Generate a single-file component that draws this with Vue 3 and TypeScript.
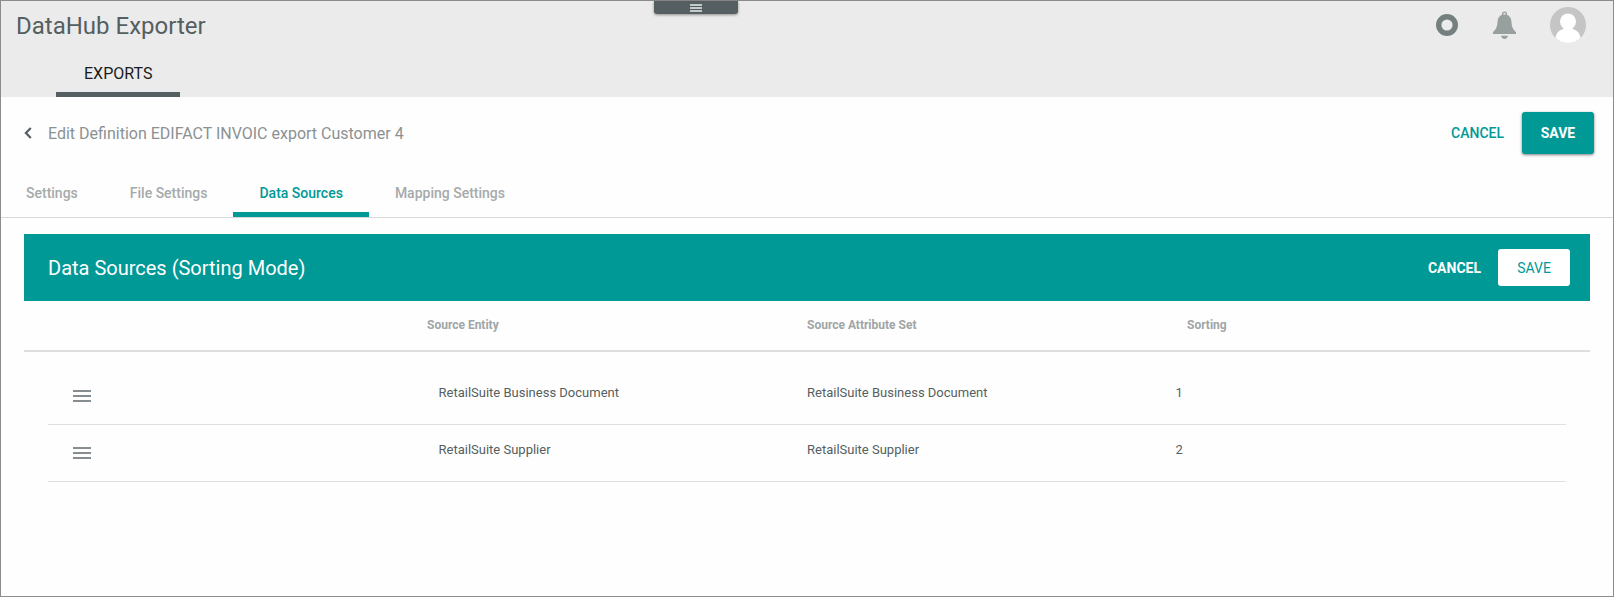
<script setup lang="ts">
import { ref } from 'vue'

interface DataSource {
  entity: string
  attributeSet: string
  sorting: number
}

const tabs: string[] = ['Settings', 'File Settings', 'Data Sources', 'Mapping Settings']
const activeTab = ref<string>('Data Sources')

const sources = ref<DataSource[]>([
  { entity: 'RetailSuite Business Document', attributeSet: 'RetailSuite Business Document', sorting: 1 },
  { entity: 'RetailSuite Supplier', attributeSet: 'RetailSuite Supplier', sorting: 2 },
])
</script>

<template>
  <div class="app">
    <header class="header">
      <button class="drawer" type="button" aria-label="Toggle menu">
        <svg width="12" height="8" viewBox="0 0 12 8" shape-rendering="crispEdges">
          <path d="M0 0h12v2H0zM0 3h12v2H0zM0 6h12v2H0z" fill="#c3caca" />
        </svg>
      </button>
      <div class="brand-row">
        <h1 class="brand">DataHub Exporter</h1>
        <div class="tools">
          <button class="icon-button" type="button" aria-label="Status">
            <svg width="24" height="24" viewBox="0 0 24 24">
              <circle cx="12" cy="12" r="8.3" fill="none" stroke="#757f7f" stroke-width="5.4" />
            </svg>
          </button>
          <button class="icon-button" type="button" aria-label="Notifications">
            <svg width="23" height="28" viewBox="0 0 23 28">
              <circle cx="11.500" cy="3" r="1.900" fill="none" stroke="#98a09f" stroke-width="1.400" />
              <path
                d="M11.500 3.600c-4.300 0-6.500 2.800-6.900 6.700C4.200 15.500 3.500 18.300 0 21v2h23v-2c-3.500-2.700-4.200-5.500-4.600-10.700C18 6.400 15.800 3.600 11.500 3.600z"
                fill="#98a09f"
              />
              <path d="M8 24.800h7c-.3 1.900-1.700 3.200-3.500 3.200S8.300 26.700 8 24.800z" fill="#98a09f" />
            </svg>
          </button>
          <button class="icon-button" type="button" aria-label="User profile">
            <svg width="36" height="36" viewBox="0 0 36 36">
              <defs>
                <clipPath id="avatar-clip"><circle cx="18" cy="18" r="18" /></clipPath>
              </defs>
              <circle cx="18" cy="18" r="18" fill="#c5c5c5" />
              <g clip-path="url(#avatar-clip)" fill="#fff">
                <circle cx="18" cy="14.500" r="8" />
                <path d="M13.500 19h9v3c4 .8 7 3.500 8 8.500V36h-25v-5.500c1-5 4-7.700 8-8.500z" />
              </g>
            </svg>
          </button>
        </div>
      </div>
      <nav class="main-nav">
        <a class="main-link" href="#exports">EXPORTS</a>
      </nav>
    </header>

    <main>
      <div class="toolbar">
        <button class="back" type="button" aria-label="Back">
          <svg width="8" height="12" viewBox="0 0 8 12">
            <path d="M6.800 1L1.900 6l4.900 5" fill="none" stroke="#555f61" stroke-width="2.200" />
          </svg>
        </button>
        <h2 class="page-title">Edit Definition EDIFACT INVOIC export Customer 4</h2>
        <button class="text-button" type="button">CANCEL</button>
        <button class="button primary" type="button">SAVE</button>
      </div>

      <div class="tabs" role="tablist">
        <button
          v-for="tab in tabs"
          :key="tab"
          class="tab"
          :class="{ active: tab === activeTab }"
          type="button"
          role="tab"
          :aria-selected="tab === activeTab"
          @click="activeTab = tab"
        >
          {{ tab }}
        </button>
      </div>

      <section class="panel">
        <div class="banner">
          <h3 class="banner-title">Data Sources (Sorting Mode)</h3>
          <button class="text-button light" type="button">CANCEL</button>
          <button class="button inverse" type="button">SAVE</button>
        </div>

        <table class="table">
          <thead>
            <tr class="head-row">
              <td></td>
              <th scope="col">Source Entity</th>
              <th scope="col">Source Attribute Set</th>
              <th scope="col">Sorting</th>
            </tr>
          </thead>
          <tbody class="body">
            <tr v-for="source in sources" :key="source.sorting" class="row">
              <td class="handle-cell">
                <button class="handle" type="button" :aria-label="`Move ${source.entity}`">
                  <svg width="18" height="12" viewBox="0 0 18 12" shape-rendering="crispEdges">
                    <path d="M0 0h18v2H0zM0 5h18v2H0zM0 10h18v2H0z" fill="#868e91" />
                  </svg>
                </button>
              </td>
              <td>{{ source.entity }}</td>
              <td>{{ source.attributeSet }}</td>
              <td>{{ source.sorting }}</td>
            </tr>
          </tbody>
        </table>
      </section>
    </main>
  </div>
</template>

<style>
body {
  margin: 0;
}
</style>

<style scoped>
.app,
.app * {
  box-sizing: border-box;
}

.app {
  min-height: 100vh;
  border: 1px solid #8c8c8c;
  background: #fefefe;
  color: #555f61;
  font-family: Roboto, 'Liberation Sans', sans-serif;
}

button {
  margin: 0;
  padding: 0;
  border: 0;
  background: none;
  color: inherit;
  font: inherit;
  cursor: pointer;
}

svg {
  display: block;
}

h1,
h2,
h3 {
  margin: 0;
}

.header {
  position: relative;
  background: #ebebeb;
}

.drawer {
  position: absolute;
  top: 0;
  left: 653px;
  display: flex;
  align-items: center;
  justify-content: center;
  width: 84px;
  height: 13px;
  border-radius: 0 0 3px 3px;
  background: #555f61;
  box-shadow: 0 1px 3px rgba(0, 0, 0, 0.4);
}

.brand-row {
  display: flex;
  align-items: center;
  justify-content: space-between;
  height: 48px;
  padding: 0 27px 0 15px;
}

.brand {
  padding-top: 2px;
  font-size: 24px;
  font-weight: 400;
  line-height: 32px;
}

.tools {
  display: flex;
  align-items: center;
  gap: 34px;
}

.main-nav {
  display: flex;
  padding-left: 55px;
}

.main-link {
  height: 48px;
  padding: 13px 28px 0;
  border-bottom: 5px solid #555f61;
  color: #1a1a1a;
  font-size: 16px;
  line-height: 24px;
  text-decoration: none;
}

.toolbar {
  display: flex;
  align-items: center;
  height: 72px;
  padding: 0 19px 0 23px;
}

.back {
  width: 24px;
}

.page-title {
  flex: 1;
  color: #8b9192;
  font-size: 16px;
  font-weight: 400;
}

.text-button {
  margin-right: 18px;
  color: #009996;
  font-size: 14px;
  font-weight: 500;
}

.text-button.light {
  margin-right: 17px;
  color: #fff;
  font-weight: 700;
}

.button {
  width: 72px;
  border-radius: 3px;
  font-size: 14px;
}

.primary {
  height: 42px;
  background: #009996;
  box-shadow: 0 1px 3px rgba(0, 0, 0, 0.5);
  color: #fff;
  font-weight: 700;
}

.inverse {
  height: 37px;
  background: #fff;
  color: #009996;
  font-weight: 400;
}

.banner .text-button,
.banner .button {
  line-height: 16px;
}

.tabs {
  display: flex;
  border-bottom: 1px solid #d8d8d8;
}

.tab {
  height: 48px;
  padding: 4px 26px 0;
  border-bottom: 5px solid transparent;
  color: #a5aaab;
  font-size: 14px;
  font-weight: 500;
}

.tab:first-child {
  padding-left: 25px;
}

.tab.active {
  border-bottom-color: #009996;
  color: #009996;
}

.panel {
  padding: 16px 23px 0;
}

.banner {
  display: flex;
  align-items: center;
  height: 67px;
  padding: 0 20px 0 24px;
  background: #009996;
  color: #fff;
}

.banner-title {
  flex: 1;
  font-size: 20px;
  font-weight: 400;
  line-height: 24px;
}

.table,
.table thead,
.table tbody {
  display: block;
}

.table th,
.table td {
  padding: 0;
  text-align: left;
}

.head-row,
.row {
  display: grid;
  grid-template-columns: repeat(4, 1fr);
}

.head-row {
  padding: 16px 23px;
  border-bottom: 2px solid #dedede;
}

.head-row th {
  color: #a0a5a6;
  font-size: 12px;
  font-weight: 700;
  line-height: 17px;
}

.body {
  padding: 16px 24px 0;
}

.row {
  align-items: center;
  height: 57px;
  padding: 0 22px;
  border-bottom: 1px solid #e0e0e0;
  font-size: 13px;
}

.row td {
  padding-bottom: 8px;
}

.row .handle-cell {
  padding: 2px 0 0 3px;
}
</style>
